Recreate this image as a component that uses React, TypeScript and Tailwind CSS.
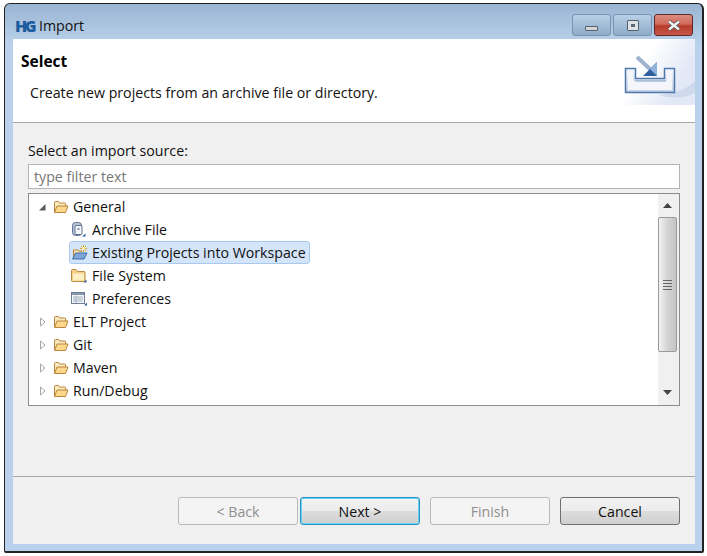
const FONT = "font-['Open_Sans','Noto_Sans',sans-serif]"

function FolderOpen() {
  return (
    <svg width="16" height="16" viewBox="0 0 16 16" className="shrink-0">
      <path d="M1.500 13V3.500q0-1 1-1h3l1.200 1.500h5q1 0 1 1V7" fill="#fbeac0" stroke="#b9843c" />
      <path d="M1.500 13.500 4 7h11l-2.500 6.500z" fill="#fcd88c" stroke="#b9843c" strokeLinejoin="round" />
    </svg>
  )
}

function FolderClosed() {
  return (
    <svg width="18" height="18" viewBox="0 0 18 18" className="shrink-0">
      <path d="M1.500 13.500V3.500q0-1 1-1h3.500l1.500 2h6.500q1 0 1 1v8q0 1-1 1h-11.500q-1 0-1-1z" fill="#f6cf84" stroke="#b98a42" />
      <path d="M3 6.500h11v7H3z" fill="#fdeec4" />
      <path d="M13.500 15.500h3v-3z" fill="#2a5f9e" />
    </svg>
  )
}

function ArchiveIcon() {
  return (
    <svg width="18" height="18" viewBox="0 0 18 18" className="shrink-0">
      <rect x="2.500" y="1.500" width="9" height="13" rx="3" fill="#b9c6dc" stroke="#5f7290" />
      <rect x="5" y="4.500" width="7" height="9" rx="1" fill="#f4f6fa" stroke="#5f7290" />
      <path d="M7.500 7h2v2h-2z" fill="#7d8ea8" />
      <path d="M12 15.500h3.500v-3z" fill="#2a5f9e" />
    </svg>
  )
}

function ExistingIcon() {
  return (
    <svg width="18" height="18" viewBox="0 0 18 18" className="shrink-0">
      <path d="M3.500 14V6h4.500l1.200 1.300h3" fill="#fbe6b4" stroke="#b9843c" />
      <path d="M2.500 15 5.500 9h11.500L14 15z" fill="#7ea6d8" stroke="#3f6ea8" strokeLinejoin="round" />
      <path d="M13.500 1v7M10 4.500h7M11 2l5 5M16 2l-5 5" stroke="#d9a93a" strokeWidth="1" />
      <circle cx="13.500" cy="4.500" r="1.500" fill="#fff6d0" />
    </svg>
  )
}

function PrefsIcon() {
  return (
    <svg width="18" height="18" viewBox="0 0 18 18" className="shrink-0">
      <rect x="1.500" y="2.500" width="13" height="11" fill="#f5f7fa" stroke="#6d7c92" />
      <path d="M2 3h12v2H2z" fill="#8797ae" />
      <path d="M3 7h10M3 9h10M3 11h10M6 5.500V13" stroke="#a3afc0" />
      <path d="M14 15.500h3v-3z" fill="#2a5f9e" />
    </svg>
  )
}

function Twisty({ open }: { open?: boolean }) {
  return (
    <svg width="9" height="10" viewBox="0 0 9 10" className="shrink-0">
      {open ? (
        <path d="M7.500 2v6.500H1z" fill="#595959" />
      ) : (
        <path d="M2.500 1v8L7 5z" fill="#fff" stroke="#a6a6a6" />
      )}
    </svg>
  )
}

function TreeRow({
  label,
  depth = 0,
  open,
  selected,
  icon,
}: {
  label: string
  depth?: number
  open?: boolean
  selected?: boolean
  icon?: React.ReactNode
}) {
  if (depth === 1) {
    return (
      <div className="h-[23px] flex items-center pl-[40px]">
        <div
          className={`h-[23px] flex items-center gap-[4px] pr-[3px] rounded-[3px] border ${
            selected ? 'bg-[#d4e5f9] border-[#a9c8ee]' : 'border-transparent'
          }`}
        >
          {icon}
          <span className="text-[14.2px] text-[#111] whitespace-nowrap">{label}</span>
        </div>
      </div>
    )
  }
  return (
    <div className="h-[23px] flex items-center pl-[9px] gap-[6px]">
      <Twisty open={open} />
      <FolderOpen />
      <span className="text-[14.2px] text-[#111] ml-[-2px] whitespace-nowrap">{label}</span>
    </div>
  )
}

function Scrollbar() {
  return (
    <div className="w-[21px] bg-[#f0f0f0] flex flex-col items-start">
      <div className="w-[19px] h-[23px] flex items-center justify-center">
        <svg width="9" height="5" viewBox="0 0 9 5"><path d="M4.500 0 9 5H0z" fill="#444" /></svg>
      </div>
      <div className="w-[19px] h-[135px] border border-[#9a9a9a] rounded-[2px] bg-gradient-to-r from-[#f2f2f2] via-[#d4d4d4] to-[#c4c4c4] flex items-center justify-center">
        <div className="w-[9px] flex flex-col gap-[2px]">
          <div className="h-px bg-[#666]" />
          <div className="h-px bg-[#666]" />
          <div className="h-px bg-[#666]" />
          <div className="h-px bg-[#666]" />
        </div>
      </div>
      <div className="w-[19px] flex-1 flex items-center justify-center pt-[27px]">
        <svg width="9" height="5" viewBox="0 0 9 5"><path d="M0 0h9L4.500 5z" fill="#444" /></svg>
      </div>
    </div>
  )
}

function ImportArt() {
  return (
    <svg width="76" height="66" viewBox="0 0 76 66" className="shrink-0">
      <defs>
        <linearGradient id="bg" x1="0" y1="0" x2="1" y2="0.5">
          <stop offset="0.4" stopColor="#ffffff" />
          <stop offset="0.9" stopColor="#e2e8f6" />
        </linearGradient>
        <linearGradient id="tray" x1="0" y1="0" x2="0" y2="1">
          <stop offset="0" stopColor="#f4f6fb" />
          <stop offset="1" stopColor="#c3d0e4" />
        </linearGradient>
      </defs>
      <rect width="76" height="66" fill="url(#bg)" />
      <path d="M40 56Q64 54 76 42V54Q60 62 40 56z" fill="#cfd9ee" />
      <path d="M6.500 29.500h10v10h29v-10h10v24h-49z" fill="url(#tray)" stroke="#4f77ac" strokeWidth="1.500" />
      <path d="M9 32h5v10h34V32h5v19H9z" fill="#f4f6fb" />
      <path d="M16 42h31" stroke="#7f9cc4" strokeWidth="1" />
      <path d="M18 18 32 31" stroke="#9fb3cf" strokeWidth="4" />
      <path d="M38 23v14H24z" fill="#2f5f9f" />
      <path d="M38 23v14l-7-7z" fill="#8fb2dd" />
    </svg>
  )
}

function DialogButton({ label, variant }: { label: string; variant: 'disabled' | 'default' | 'normal' }) {
  if (variant === 'disabled') {
    return (
      <button className="w-[120px] h-[28px] pt-[1px] rounded-[3px] border border-[#b9b9b9] bg-[#f4f4f4] text-[14.2px] text-[#8f8f8f]">
        {label}
      </button>
    )
  }
  return (
    <button
      className={`w-[120px] h-[28px] pt-[1px] rounded-[3px] border bg-[linear-gradient(#f3f3f3_0%,#ebebeb_48%,#dddddd_50%,#cfcfcf_100%)] text-[14.2px] text-[#111] ${
        variant === 'default' ? 'border-[#2f8fc8] shadow-[inset_0_0_0_1px_#63d6f5]' : 'border-[#707070]'
      }`}
    >
      {label}
    </button>
  )
}

function WindowControls() {
  return (
    <div className="flex gap-[2px] pt-[10px]">
      <div className="w-[39px] h-[22px] rounded-[3px] border border-[#7b93ae] bg-gradient-to-b from-[#b9d0e8] to-[#8eacc9] flex items-end justify-center pb-[4px]">
        <div className="w-[13px] h-[5px] bg-[#d5d5d5] border border-[#53616f] rounded-[1px]" />
      </div>
      <div className="w-[39px] h-[22px] rounded-[3px] border border-[#7b93ae] bg-gradient-to-b from-[#b9d0e8] to-[#8eacc9] flex items-center justify-center">
        <div className="w-[12px] h-[11px] bg-[#dfe3e8] border border-[#53616f] rounded-[1px] flex items-center justify-center">
          <div className="w-[4px] h-[3px] bg-[#5c6a78]" />
        </div>
      </div>
      <div className="w-[39px] h-[22px] rounded-[3px] border border-[#5e2a28] bg-[linear-gradient(#dc8d7f_0%,#cf6a5c_45%,#b83a2c_55%,#c4584a_100%)] flex items-center justify-center">
        <svg width="14" height="11" viewBox="0 0 14 11">
          <path d="M2 1.500 12 9.500M12 1.500 2 9.500" stroke="#4d4d4d" strokeWidth="4" />
          <path d="M2 1.500 12 9.500M12 1.500 2 9.500" stroke="#f2f2f2" strokeWidth="2.500" />
        </svg>
      </div>
    </div>
  )
}

export default function App() {
  return (
    <div className={`${FONT} w-[707px] h-[556px] bg-white pt-[3px] pl-[4px] overflow-hidden`}>
      <div className="w-[700px] h-[550px] border border-[#222] border-r-2 border-b-2 rounded-t-[6px] rounded-b-[2px] bg-[linear-gradient(#9ab5d3_0px,#b9d1ea_40px,#b9d1ec_100%)] flex flex-col">
        {/* Title bar */}
        <div className="h-[35px] shrink-0 flex justify-between pl-[10px] pr-[9px]">
          <div className="flex items-center gap-[3px] pt-[9px]">
            <span className="text-[16px] font-extrabold text-[#1c5c9c] tracking-[-2.5px] w-[21px]">HG</span>
            <span className="text-[14.2px] text-[#111]">Import</span>
          </div>
          <WindowControls />
        </div>

        {/* Content */}
        <div className="mx-[8px] w-[682px] h-[505px] bg-[#f0f0f0] flex flex-col">
          <div className="h-[84px] shrink-0 bg-white border-b border-[#a8a8a8] flex justify-between">
            <div className="pl-[8px] pt-[10px]">
              <div className="text-[15.500px] font-bold text-black leading-[24px]">Select</div>
              <div className="text-[14.2px] text-[#111] pl-[9px] pt-[10px] leading-[20px]">
                Create new projects from an archive file or directory.
              </div>
            </div>
            <ImportArt />
          </div>

          <div className="flex-1 flex flex-col px-[15px]">
            <div className="text-[14.2px] text-[#111] pt-[15px] leading-[25px]">Select an import source:</div>
            <input
              readOnly
              placeholder="type filter text"
              className="h-[25px] mt-[1px] shrink-0 bg-white border border-[#b4b4b4] px-[5px] text-[14.2px] placeholder:text-[#777] outline-none"
            />
            <div className="h-[213px] mt-[4px] shrink-0 bg-white border border-[#8c8c8c] flex">
              <div className="flex-1 pt-[1px]">
                <TreeRow label="General" open />
                <TreeRow label="Archive File" depth={1} icon={<ArchiveIcon />} />
                <TreeRow label="Existing Projects into Workspace" depth={1} selected icon={<ExistingIcon />} />
                <TreeRow label="File System" depth={1} icon={<FolderClosed />} />
                <TreeRow label="Preferences" depth={1} icon={<PrefsIcon />} />
                <TreeRow label="ELT Project" />
                <TreeRow label="Git" />
                <TreeRow label="Maven" />
                <TreeRow label="Run/Debug" />
              </div>
              <Scrollbar />
            </div>
          </div>

          <div className="h-[68px] shrink-0 border-t border-[#a8a8a8] flex justify-end items-start pt-[20px] pr-[15px]">
            <DialogButton label="< Back" variant="disabled" />
            <div className="w-[2px]" />
            <DialogButton label="Next >" variant="default" />
            <div className="w-[10px]" />
            <DialogButton label="Finish" variant="disabled" />
            <div className="w-[10px]" />
            <DialogButton label="Cancel" variant="normal" />
          </div>
        </div>
      </div>
    </div>
  )
}
